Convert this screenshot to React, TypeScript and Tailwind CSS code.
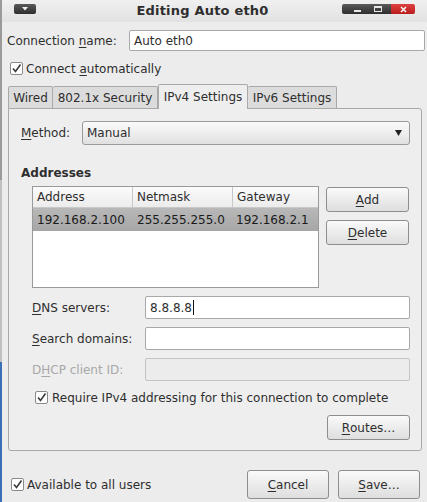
import React from "react";

const U = ({ children }: { children: React.ReactNode }) => (
  <span className="underline underline-offset-2 decoration-1">{children}</span>
);

const Check = () => (
  <div className="w-[13px] h-[13px] bg-white border border-[#8a8a8a] rounded-[2px] flex items-center justify-center shrink-0">
    <svg width="11" height="11" viewBox="0 0 11 11">
      <path d="M2 5.5 L4.5 8.5 L9.5 1.5" fill="none" stroke="#3a3a3a" strokeWidth="1.6" />
    </svg>
  </div>
);

const Btn = ({ children, className = "" }: { children: React.ReactNode; className?: string }) => (
  <div
    className={`flex items-center justify-center border border-[#8e8e8e] rounded-[3px] bg-gradient-to-b from-[#fafafa] to-[#dedede] text-[#2e2e2e] ${className}`}
  >
    {children}
  </div>
);

export default function App() {
  return (
    <div
      className="w-[427px] h-[502px] bg-[#ececec] flex overflow-hidden text-[12px] text-[#2e2e2e]"
      style={{ fontFamily: '"DejaVu Sans", sans-serif' }}
    >
      <div className="w-[2px] flex flex-col shrink-0">
        <div className="h-[180px] bg-[#9a9a9a]" />
        <div className="flex-1 bg-[#c0c0c0]" />
        <div className="h-[140px] bg-[#3b6fb6]" />
      </div>
      <div className="flex-1 flex flex-col">
        {/* title bar */}
        <div className="h-[22px] bg-gradient-to-b from-[#f0f0f0] to-[#e2e2e2] flex items-center relative">
          <div className="absolute left-[12px] top-[4px] w-[22px] h-[10px] rounded-[2px] bg-gradient-to-b from-[#5a5a5a] to-[#2e2e2e] flex items-center justify-center">
            <svg width="6" height="4" viewBox="0 0 6 4">
              <path d="M0 0 H6 L3 3.5 Z" fill="#f0f0f0" />
            </svg>
          </div>
          <div className="flex-1 text-center font-bold text-[13px] text-[#2e2e2e] tracking-[0.2px] pr-[24px]">Editing Auto eth0</div>
          <div className="absolute left-[340px] top-[4px] w-[73px] h-[10px] rounded-[2px] overflow-hidden flex">
            <div className="w-[49px] bg-gradient-to-b from-[#5a5a5a] to-[#2e2e2e] flex items-center">
              <div className="ml-[12px] mt-[3px] w-[7px] h-[2px] bg-[#e8e8e8]" />
              <div className="ml-[13px] w-[8px] h-[6px] border border-[#e8e8e8] border-t-2" />
            </div>
            <div className="flex-1 bg-gradient-to-b from-[#e04040] to-[#b81c1c] flex items-center justify-center">
              <svg width="7" height="7" viewBox="0 0 7 7">
                <path d="M1 1 L6 6 M6 1 L1 6" stroke="#f5f5f5" strokeWidth="1.6" />
              </svg>
            </div>
          </div>
        </div>

        {/* connection name */}
        <div className="mt-[8px] flex items-center pl-[5px] pr-[2px]">
          <div className="w-[122px]">
            Connection <U>n</U>ame:
          </div>
          <div className="flex-1 h-[21px] bg-white border border-[#a9a9a9] rounded-[2px] flex items-center pl-[4px]">
            Auto eth0
          </div>
        </div>

        {/* connect automatically */}
        <div className="mt-[11px] flex items-center pl-[8px] gap-[3px] h-[13px]">
          <Check />
          <span>
            Connect <U>a</U>utomatically
          </span>
        </div>

        {/* tabs */}
        <div className="mt-[9px] ml-[6px] flex items-end h-[24px] relative z-10">
          <div className="h-[22px] w-[45px] bg-[#dcdcdc] border border-[#a9a9a9] border-b-0 rounded-t-[2px] flex items-center justify-center">
            Wired
          </div>
          <div className="h-[22px] w-[105px] bg-[#dcdcdc] border border-[#a9a9a9] border-b-0 border-l-0 rounded-t-[2px] flex items-center justify-center">
            802.1x Security
          </div>
          <div className="h-[25px] w-[90px] bg-[#eeeeee] border border-[#a9a9a9] border-b-0 rounded-t-[2px] flex items-center justify-center mb-[-1px] pb-[1px]">
            IPv4 Settings
          </div>
          <div className="h-[22px] w-[89px] bg-[#dcdcdc] border border-[#a9a9a9] border-b-0 border-l-0 rounded-t-[2px] flex items-center justify-center">
            IPv6 Settings
          </div>
        </div>

        {/* panel */}
        <div className="ml-[6px] w-[414px] h-[343px] bg-[#eeeeee] border border-[#a9a9a9] rounded-b-[3px] rounded-tr-[3px] flex flex-col pl-[12px] pr-[11px] pt-[12px]">
          <div className="flex items-center h-[24px]">
            <div className="w-[61px]">
              <U>M</U>ethod:
            </div>
            <div className="flex-1 h-[24px] border border-[#9a9a9a] rounded-[3px] bg-gradient-to-b from-[#fbfbfb] to-[#e0e0e0] flex items-center pl-[4px] pr-[7px]">
              <span className="flex-1">Manual</span>
              <svg width="7" height="6" viewBox="0 0 7 6">
                <path d="M0 0 H7 L3.5 6 Z" fill="#222" />
              </svg>
            </div>
          </div>

          <div className="mt-[20px] font-bold text-[12px] h-[16px] leading-[16px]">Addresses</div>

          <div className="mt-[5px] ml-[11px] flex">
            <div className="w-[287px] h-[102px] bg-white border border-[#9a9a9a] flex flex-col">
              <div className="h-[21px] flex bg-gradient-to-b from-[#fbfbfb] to-[#ececec] border-b border-[#c8c8c8]">
                <div className="w-[100px] border-r border-[#c8c8c8] pl-[4px] flex items-center">Address</div>
                <div className="w-[100px] border-r border-[#c8c8c8] pl-[4px] flex items-center">Netmask</div>
                <div className="flex-1 pl-[4px] flex items-center">Gateway</div>
              </div>
              <div className="h-[23px] flex bg-gradient-to-b from-[#b8b8b8] to-[#a6a6a6] text-[#1a1a1a]">
                <div className="w-[100px] pl-[4px] flex items-center">192.168.2.100</div>
                <div className="w-[100px] pl-[4px] flex items-center">255.255.255.0</div>
                <div className="flex-1 pl-[3px] flex items-center">192.168.2.1</div>
              </div>
            </div>
            <div className="ml-[7px] flex flex-col gap-[8px] pt-[1px]">
              <Btn className="w-[83px] h-[25px]">
                <U>A</U>dd
              </Btn>
              <Btn className="w-[83px] h-[25px]">
                <U>D</U>elete
              </Btn>
            </div>
          </div>

          <div className="mt-[8px] ml-[11px] flex flex-col gap-[8px]">
            <div className="flex items-center h-[23px]">
              <div className="w-[113px]">
                <U>D</U>NS servers:
              </div>
              <div className="flex-1 h-[23px] bg-white border border-[#a9a9a9] rounded-[2px] flex items-center pl-[4px]">
                8.8.8.8<span className="w-[1px] h-[15px] bg-[#111] ml-[1px]" />
              </div>
            </div>
            <div className="flex items-center h-[23px]">
              <div className="w-[113px]">
                <U>S</U>earch domains:
              </div>
              <div className="flex-1 h-[23px] bg-white border border-[#a9a9a9] rounded-[2px]" />
            </div>
            <div className="flex items-center h-[23px] text-[#a8a8a8]">
              <div className="w-[113px]">
                D<U>H</U>CP client ID:
              </div>
              <div className="flex-1 h-[23px] bg-[#ececec] border border-[#c4c4c4] rounded-[2px]" />
            </div>
          </div>

          <div className="mt-[10px] ml-[14px] flex items-center gap-[4px] h-[13px]">
            <Check />
            <span className="whitespace-nowrap">Require IPv4 addressing for this connection to complete</span>
          </div>

          <div className="mt-[11px] flex justify-end">
            <Btn className="w-[83px] h-[25px]">
              <U>R</U>outes…
            </Btn>
          </div>
        </div>

        {/* bottom */}
        <div className="mt-[19px] flex items-center pl-[9px] pr-[7px]">
          <div className="flex items-center gap-[3px] flex-1">
            <Check />
            <span>Available to all users</span>
          </div>
          <Btn className="w-[82px] h-[29px]">
            <U>C</U>ancel
          </Btn>
          <Btn className="w-[82px] h-[29px] ml-[9px]">
            <U>S</U>ave…
          </Btn>
        </div>
      </div>
    </div>
  );
}
